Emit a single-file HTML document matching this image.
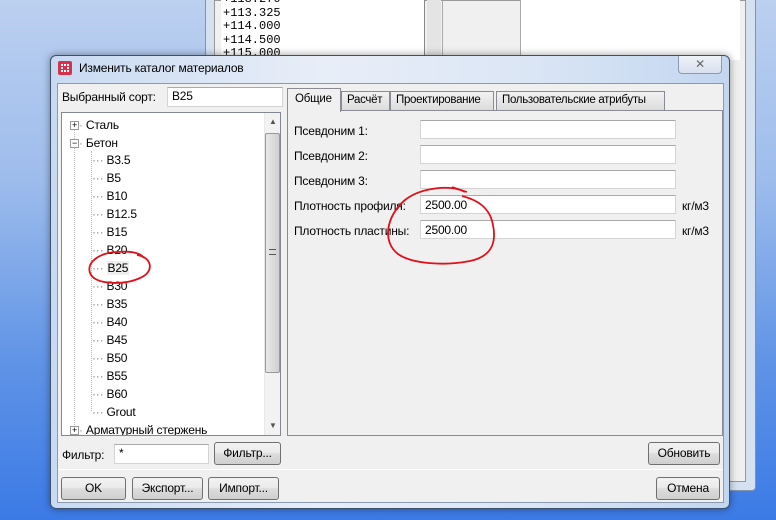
<!DOCTYPE html>
<html><head><meta charset="utf-8"><style>
*{box-sizing:border-box;margin:0;padding:0}
body{width:776px;height:520px;overflow:hidden;position:relative;font-family:"Liberation Sans",sans-serif;font-size:12px;letter-spacing:-0.2px;color:#000;background:linear-gradient(180deg,#bcd0f0 0%,#9dbcec 35%,#5f93e6 70%,#3b7ae6 100%)}
.a{position:absolute;white-space:nowrap}
.inp{position:absolute;background:#fff;border:1px solid #d4d4d4;border-top-color:#aaa;padding:2px 4px;height:19px;line-height:13px;white-space:nowrap}
.btn{position:absolute;height:23px;border:1px solid #707070;border-radius:3px;background:linear-gradient(#f2f2f2 0%,#ebebeb 45%,#dddddd 50%,#cfcfcf 100%);text-align:center;line-height:21px;white-space:nowrap}
.ti{position:absolute;left:0;height:18px;line-height:18px;white-space:nowrap}
.lab{position:absolute;left:294px;white-space:nowrap}
.tab{position:absolute;top:91px;height:20px;border:1px solid #898c95;background:linear-gradient(#f2f2f2,#dcdcdc);padding:2px 0 0 5px;white-space:nowrap;overflow:hidden;font-size:11.5px;letter-spacing:-0.3px}
</style></head><body>
<div class="a" style="left:205px;top:0;width:551px;height:491px;background:#d5e1f1;border:1px solid #7f93b0;border-top:none;border-radius:0 0 4px 4px"></div>
<div class="a" style="left:214px;top:0;width:532px;height:482px;background:#f0f0f0;border:1px solid #999"></div>
<div class="a" style="left:221px;top:0;width:204px;height:60px;background:#fff;border-right:1px solid #888;font-family:'Liberation Mono',monospace;font-size:12px;letter-spacing:0;line-height:13.5px;padding-left:2px">
<div style="margin-top:-7px">+113.270</div><div>+113.325</div><div>+114.000</div><div>+114.500</div><div>+115.000</div></div>
<div class="a" style="left:427px;top:0;width:14px;height:60px;background:#e4e4e4"></div>
<div class="a" style="left:442px;top:0;width:1px;height:482px;background:#aaa"></div>
<div class="a" style="left:520px;top:0;width:220px;height:60px;background:#fff;border-left:1px solid #aaa"></div>
<div class="a" style="left:50px;top:55px;width:680px;height:454px;border:1px solid #3d4f6a;border-radius:6px;background:linear-gradient(90deg,#c8daf2,#e8eef8 40%,#dbe6f5 70%,#c3d6f0);box-shadow:0 0 8px rgba(0,0,0,.4)"></div>
<div class="a" style="left:58px;top:61px;width:14px;height:14px;background:#d6304a;border-radius:2px"></div>
<div class="a" style="left:61px;top:64px;width:8px;height:8px;border:2px dotted #fff"></div>
<div class="a" style="left:79px;top:61px;font-size:12px">Изменить каталог материалов</div>
<div class="a" style="left:678px;top:56px;width:44px;height:18px;border:1px solid #8c9bb4;border-top:none;border-radius:0 0 4px 4px;background:linear-gradient(#eef2f8,#d8e1ee);text-align:center;font-size:12px;color:#666;line-height:16px">✕</div>
<div class="a" style="left:57px;top:83px;width:667px;height:420px;background:#f0f0f0;border:1px solid #8a9ab0"></div>
<div class="a" style="left:62px;top:90px">Выбранный сорт:</div>
<div class="inp" style="left:167px;top:87px;width:116px;height:20px">B25</div>
<div class="a" style="left:61px;top:112px;width:220px;height:324px;background:#fff;border:1px solid #828790;overflow:hidden">
 <div class="a" style="left:12px;top:14px;width:1px;height:310px;border-left:1px dotted #bbb"></div>
 <div class="a" style="left:29px;top:38px;width:1px;height:260px;border-left:1px dotted #bbb"></div>
 <div class="ti" style="top:3px;left:8px"><span style="display:inline-block;width:9px;height:9px;border:1px solid #999;font-size:9px;line-height:7px;text-align:center;background:#fff;vertical-align:middle">+</span><span style="color:#999">·</span> Сталь</div>
 <div class="ti" style="top:21px;left:8px"><span style="display:inline-block;width:9px;height:9px;border:1px solid #999;font-size:9px;line-height:7px;text-align:center;background:#fff;vertical-align:middle">−</span><span style="color:#999">·</span> Бетон</div>
 <div class="ti" style="top:38px;left:30px"><span style="color:#888">···</span> B3.5</div>
 <div class="ti" style="top:56px;left:30px"><span style="color:#888">···</span> B5</div>
 <div class="ti" style="top:74px;left:30px"><span style="color:#888">···</span> B10</div>
 <div class="ti" style="top:92px;left:30px"><span style="color:#888">···</span> B12.5</div>
 <div class="ti" style="top:110px;left:30px"><span style="color:#888">···</span> B15</div>
 <div class="ti" style="top:128px;left:30px"><span style="color:#888">···</span> B20</div>
 <div class="ti" style="top:146px;left:30px"><span style="color:#888">···</span> <span style="background:#eee;padding:0 1px">B25</span></div>
 <div class="ti" style="top:164px;left:30px"><span style="color:#888">···</span> B30</div>
 <div class="ti" style="top:182px;left:30px"><span style="color:#888">···</span> B35</div>
 <div class="ti" style="top:200px;left:30px"><span style="color:#888">···</span> B40</div>
 <div class="ti" style="top:218px;left:30px"><span style="color:#888">···</span> B45</div>
 <div class="ti" style="top:236px;left:30px"><span style="color:#888">···</span> B50</div>
 <div class="ti" style="top:254px;left:30px"><span style="color:#888">···</span> B55</div>
 <div class="ti" style="top:272px;left:30px"><span style="color:#888">···</span> B60</div>
 <div class="ti" style="top:290px;left:30px"><span style="color:#888">···</span> Grout</div>
 <div class="ti" style="top:308px;left:8px"><span style="display:inline-block;width:9px;height:9px;border:1px solid #999;font-size:9px;line-height:7px;text-align:center;background:#fff;vertical-align:middle">+</span><span style="color:#999">·</span> Арматурный стержень</div>
 <div class="a" style="left:202px;top:0;width:17px;height:322px;background:#f2f2f2;border-left:1px solid #e8e8e8"></div>
 <div class="a" style="left:207px;top:4px;font-size:8px;color:#555">▲</div>
 <div class="a" style="left:207px;top:308px;font-size:8px;color:#555">▼</div>
 <div class="a" style="left:203px;top:20px;width:15px;height:240px;border:1px solid #999;border-radius:2px;background:linear-gradient(90deg,#e8e8e8,#dcdcdc 50%,#cfcfcf)"></div>
 <div class="a" style="left:207px;top:136px;width:7px;height:6px;border-top:1px solid #555;border-bottom:1px solid #555"></div>
</div>
<div class="a" style="left:287px;top:110px;width:436px;height:326px;border:1px solid #898c95;background:#f0f0f0"></div>
<div class="tab" style="left:341px;width:49px">Расчёт</div>
<div class="tab" style="left:390px;width:104px">Проектирование</div>
<div class="tab" style="left:496px;width:169px">Пользовательские атрибуты</div>
<div class="a" style="left:287px;top:88px;width:54px;height:24px;border:1px solid #898c95;border-bottom:none;background:#f0f0f0;padding:4px 7px;font-size:11.5px">Общие</div>
<div class="lab" style="top:124px">Псевдоним 1:</div>
<div class="lab" style="top:149px">Псевдоним 2:</div>
<div class="lab" style="top:174px">Псевдоним 3:</div>
<div class="lab" style="top:199px">Плотность профиля:</div>
<div class="lab" style="top:224px">Плотность пластины:</div>
<div class="inp" style="left:420px;top:120px;width:256px"></div>
<div class="inp" style="left:420px;top:145px;width:256px"></div>
<div class="inp" style="left:420px;top:170px;width:256px"></div>
<div class="inp" style="left:420px;top:195px;width:256px;padding-top:3px">2500.00</div>
<div class="inp" style="left:420px;top:220px;width:256px;padding-top:3px">2500.00</div>
<div class="a" style="left:682px;top:199px">кг/м3</div>
<div class="a" style="left:682px;top:224px">кг/м3</div>
<div class="a" style="left:62px;top:448px">Фильтр:</div>
<div class="inp" style="left:114px;top:444px;width:95px;height:20px">*</div>
<div class="btn" style="left:214px;top:442px;width:67px">Фильтр...</div>
<div class="btn" style="left:648px;top:442px;width:72px">Обновить</div>
<div class="a" style="left:58px;top:469px;width:665px;height:1px;background:#a0a0a0;border-bottom:1px solid #fff"></div>
<div class="btn" style="left:61px;top:477px;width:65px">OK</div>
<div class="btn" style="left:132px;top:477px;width:71px">Экспорт...</div>
<div class="btn" style="left:208px;top:477px;width:71px">Импорт...</div>
<div class="btn" style="left:656px;top:477px;width:64px">Отмена</div>
<svg class="a" style="left:0;top:0" width="776" height="520">
<path d="M137 255 C152 257 155 272 140 278 C125 285 98 285 91 275 C84 263 100 252 118 252 C128 251 140 252 144 258" fill="none" stroke="#e0101a" stroke-width="1.8"/>
<path d="M465 192 C450 184 420 188 405 200 C386 216 382 242 398 254 C412 264 445 266 470 261 C494 256 496 240 493 225 C490 208 478 200 462 196" fill="none" stroke="#e0101a" stroke-width="1.8"/>
<path d="M452 187 L467 192" fill="none" stroke="#e0101a" stroke-width="1.5"/>
</svg>
</body></html>
